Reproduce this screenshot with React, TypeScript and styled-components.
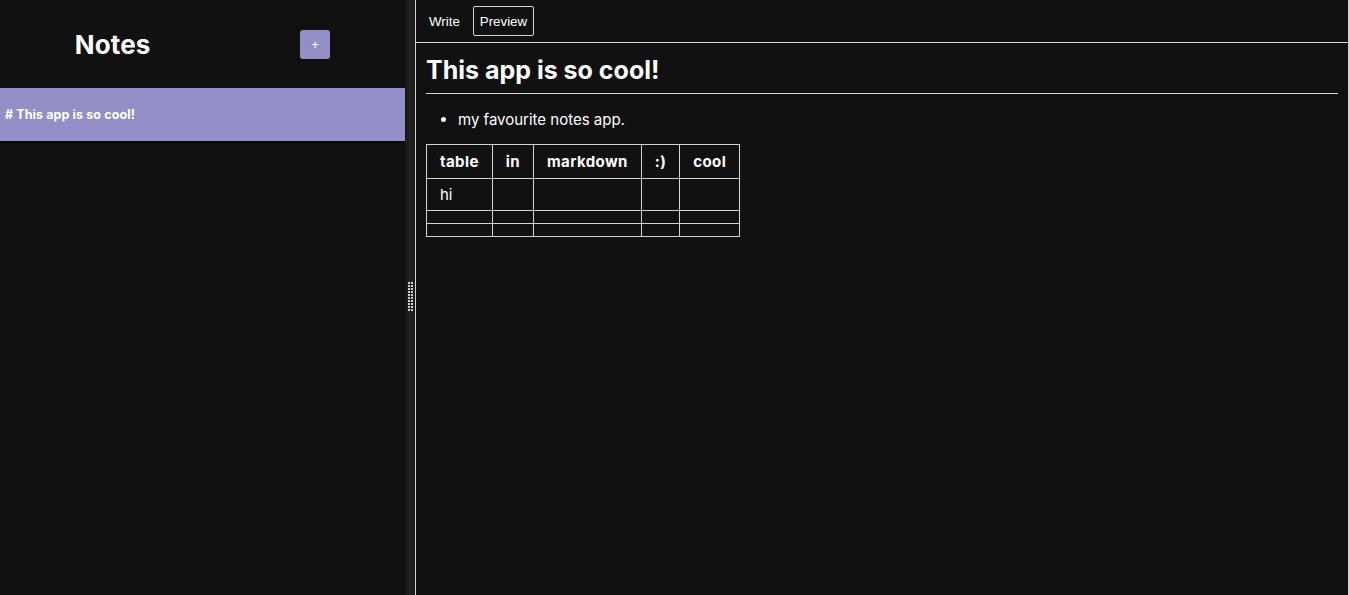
import React from 'react';
import styled, { createGlobalStyle } from 'styled-components';

const GlobalStyle = createGlobalStyle`
  html, body {
    margin: 0;
    padding: 0;
    background-color: #111111;
  }
  * {
    box-sizing: border-box;
  }
`;

const Layout = styled.div`
  display: flex;
  width: 100vw;
  height: 100vh;
  background-color: #111111;
  color: white;
  font-family: Inter, 'Noto Sans', sans-serif;
`;

const Sidebar = styled.section`
  width: 405px;
  flex-shrink: 0;
  display: flex;
  flex-direction: column;
`;

const SidebarHeader = styled.div`
  height: 88px;
  display: flex;
  justify-content: space-around;
  align-items: center;
`;

const SidebarTitle = styled.h3`
  margin: 0;
  font-size: 26px;
  font-weight: 700;
  letter-spacing: 0.1px;
`;

const NewNoteButton = styled.button`
  width: 30px;
  height: 29px;
  border: none;
  border-radius: 3px;
  background-color: #938fc6;
  color: white;
  font-size: 13px;
  font-family: 'Liberation Sans', Arial, sans-serif;
  cursor: pointer;
  padding: 0;
`;

const NoteItem = styled.div<{ $selected?: boolean }>`
  height: 53px;
  display: flex;
  align-items: center;
  padding-left: 5px;
  background-color: ${(p) => (p.$selected ? '#938fc6' : 'transparent')};
  box-shadow: 0 2px 2px rgba(0, 0, 0, 0.5);
`;

const NoteTitle = styled.h4`
  margin: 0;
  font-size: 12.5px;
  font-weight: 700;
  letter-spacing: 0.1px;
  color: #ffffff;
`;

const Gutter = styled.div`
  width: 10px;
  flex-shrink: 0;
  background: linear-gradient(90deg, #171717 0%, #222222 50%, #1a1a1a 100%);
  display: flex;
  align-items: center;
  justify-content: center;
  padding-bottom: 2px;
`;

const Editor = styled.section`
  flex: 1;
  border-left: 1px solid #d4d4d4;
  border-right: 1px solid #d4d4d4;
  display: flex;
  flex-direction: column;
  min-width: 0;
`;

const TabBar = styled.div`
  height: 43px;
  display: flex;
  align-items: center;
  gap: 6px;
  padding-left: 6px;
  border-bottom: 1px solid #d4d4d4;
`;

const Tab = styled.button<{ $active?: boolean }>`
  height: 30px;
  padding: 0 6px;
  background: transparent;
  color: white;
  font-family: 'Liberation Sans', Arial, sans-serif;
  font-size: 13.3px;
  border: 1px solid ${(p) => (p.$active ? '#d4d4d4' : 'transparent')};
  border-radius: 2px;
  cursor: pointer;
`;

const Preview = styled.div`
  padding: 0 10px;
`;

const Heading = styled.h1`
  margin: 12px 0 0 0;
  padding-bottom: 8px;
  font-size: 25px;
  font-weight: 700;
  border-bottom: 1px solid #d4d4d4;
`;

const List = styled.ul`
  margin: 16px 0 15px 0;
  padding-left: 32px;
  font-size: 15px;
`;

const Table = styled.table`
  border-collapse: collapse;
  font-size: 15px;
`;

const HeadCell = styled.th`
  border: 1px solid #d4d4d4;
  padding: 7px 13px;
  height: 33px;
  font-weight: 700;
  letter-spacing: 0.4px;
  text-align: center;
`;

const Cell = styled.td<{ $empty?: boolean }>`
  border: 1px solid #d4d4d4;
  padding: ${(p) => (p.$empty ? '0' : '6px 13px')};
  height: ${(p) => (p.$empty ? '13px' : '31px')};
`;

const GripIcon: React.FC = () => (
  <svg width="5" height="30" viewBox="0 0 5 30">
    {Array.from({ length: 10 }).map((_, r) =>
      [0, 3].map((x) => <rect key={`${r}-${x}`} x={x} y={r * 3} width="2" height="2" fill="#cfcfcf" />)
    )}
  </svg>
);

const columns = ['table', 'in', 'markdown', ':)', 'cool'];
const rows = [['hi', '', '', '', ''], ['', '', '', '', ''], ['', '', '', '', '']];

const App: React.FC = () => {
  return (
    <>
      <GlobalStyle />
      <Layout>
        <Sidebar>
          <SidebarHeader>
            <SidebarTitle>Notes</SidebarTitle>
            <NewNoteButton>+</NewNoteButton>
          </SidebarHeader>
          <NoteItem $selected>
            <NoteTitle># This app is so cool!</NoteTitle>
          </NoteItem>
        </Sidebar>
        <Gutter>
          <GripIcon />
        </Gutter>
        <Editor>
          <TabBar>
            <Tab>Write</Tab>
            <Tab $active>Preview</Tab>
          </TabBar>
          <Preview>
            <Heading>This app is so cool!</Heading>
            <List>
              <li>my favourite notes app.</li>
            </List>
            <Table>
              <thead>
                <tr>
                  {columns.map((c) => (
                    <HeadCell key={c}>{c}</HeadCell>
                  ))}
                </tr>
              </thead>
              <tbody>
                {rows.map((row, i) => (
                  <tr key={i}>
                    {row.map((cell, j) => (
                      <Cell key={j} $empty={i > 0}>
                        {cell}
                      </Cell>
                    ))}
                  </tr>
                ))}
              </tbody>
            </Table>
          </Preview>
        </Editor>
      </Layout>
    </>
  );
};

export default App;
